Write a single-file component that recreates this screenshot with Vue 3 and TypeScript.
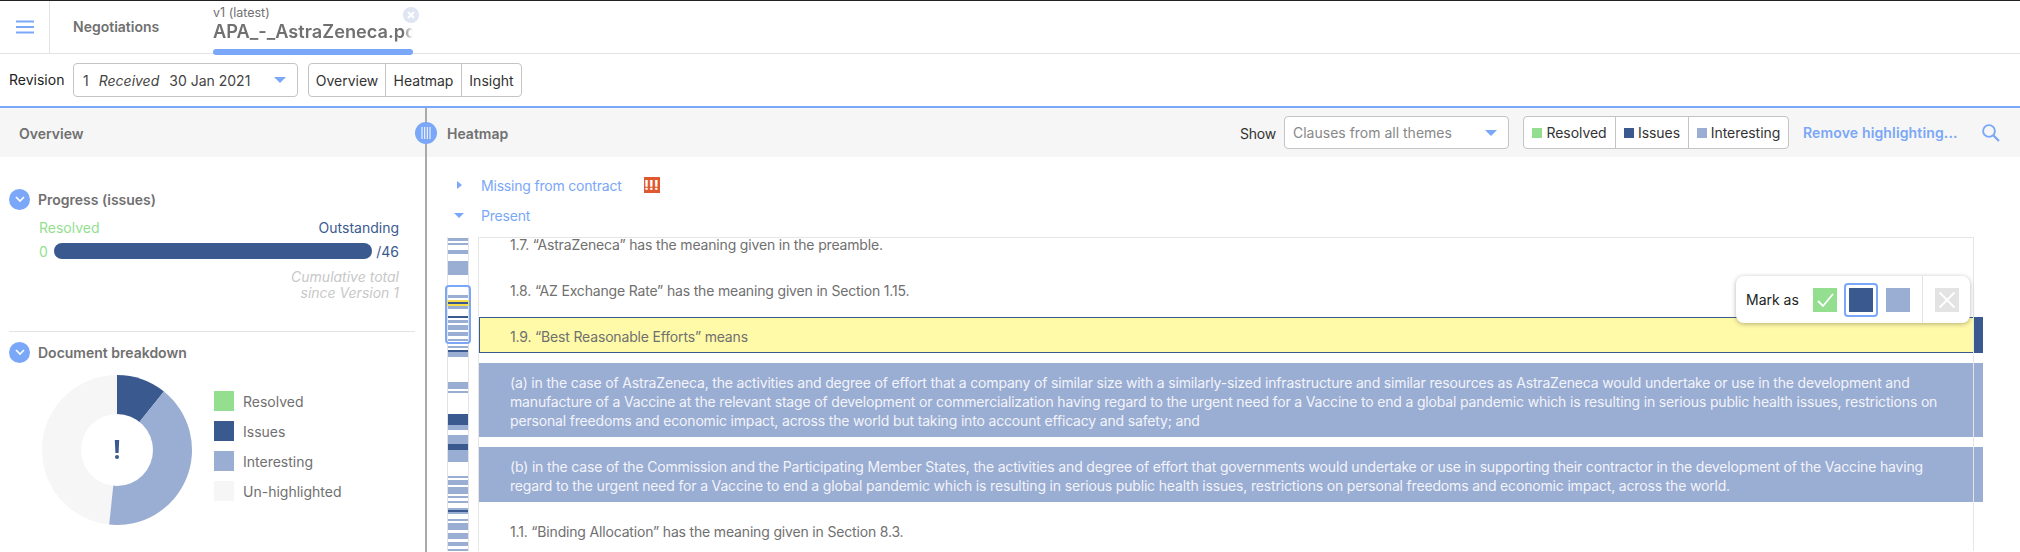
<script setup lang="ts">
type Bar = [number, number, 'l' | 'd']
const bars: Bar[] = [
  [239, 3, 'l'], [244, 2, 'l'], [251, 4, 'l'], [262, 14, 'l'], [296, 3, 'l'], [302, 5, 'd'], [307, 3, 'l'],
  [317, 2, 'd'], [321, 3, 'l'], [326, 5, 'l'], [333, 4, 'l'], [340, 2, 'l'], [347, 2, 'l'], [351, 2, 'd'],
  [353, 5, 'l'], [383, 7, 'l'], [392, 2, 'l'], [415, 11, 'd'], [426, 5, 'l'], [436, 9, 'l'], [445, 6, 'd'],
  [451, 12, 'l'], [477, 2, 'l'], [481, 5, 'l'], [488, 7, 'l'], [497, 2, 'l'], [502, 2, 'l'], [509, 2, 'l'],
  [511, 2, 'd'], [513, 2, 'l'], [520, 2, 'l'], [524, 7, 'l'], [534, 6, 'l'], [543, 4, 'l'], [550, 2, 'l'],
]
const stripBars = bars.map(([y, h, c], i) => ({
  key: i,
  cls: c === 'd' ? 'dark' : 'light',
  style: { height: `${h}px`, marginTop: `${y - (i ? bars[i - 1][0] + bars[i - 1][1] : 238)}px` },
}))
const legend = [
  { label: 'Resolved', cls: 'green' },
  { label: 'Issues', cls: 'dark' },
  { label: 'Interesting', cls: 'light' },
  { label: 'Un-highlighted', cls: 'pale' },
]
</script>

<template>
  <div class="app">
    <header class="topbar">
      <button class="menu" aria-label="Menu">
        <svg width="18" height="14" viewBox="0 0 18 14"><path d="M0 1.5h18M0 7h18M0 12.5h18" stroke="#7aa7f7" stroke-width="2" fill="none" /></svg>
      </button>
      <div class="crumb">Negotiations</div>
      <div class="tab">
        <div class="tab-ver">v1 (latest)</div>
        <div class="tab-name">APA_-_AstraZeneca.pdf</div>
        <div class="tab-bar"></div>
        <span class="tab-close">
          <svg width="16" height="16" viewBox="0 0 16 16"><path d="M5 5l6 6M11 5l-6 6" stroke="#fff" stroke-width="2" fill="none" /></svg>
        </span>
      </div>
    </header>

    <div class="toolbar">
      <span class="tool-label">Revision</span>
      <div class="select rev">
        <span>1</span><em>Received</em><span>30 Jan 2021</span>
        <i class="caret"></i>
      </div>
      <div class="seg views">
        <span class="seg-item v1">Overview</span>
        <span class="seg-item v2">Heatmap</span>
        <span class="seg-item v3">Insight</span>
      </div>
    </div>

    <div class="panels">
      <aside class="left">
        <div class="phead"><span class="ptitle">Overview</span></div>
        <section class="prog">
          <div class="sec-head">
            <span class="chev"><svg width="12" height="8" viewBox="0 0 12 8"><path d="M2 2l4 4 4-4" stroke="#fff" stroke-width="1.6" fill="none" /></svg></span>
            <span class="sec-title">Progress (issues)</span>
          </div>
          <div class="prog-labels"><span class="c-green">Resolved</span><span class="c-dark">Outstanding</span></div>
          <div class="prog-bar">
            <span class="c-green">0</span>
            <div class="bar"></div>
            <span class="c-dark">/46</span>
          </div>
          <div class="cumul">Cumulative total<br />since Version 1</div>
        </section>
        <section class="breakdown">
          <div class="sec-head">
            <span class="chev"><svg width="12" height="8" viewBox="0 0 12 8"><path d="M2 2l4 4 4-4" stroke="#fff" stroke-width="1.6" fill="none" /></svg></span>
            <span class="sec-title">Document breakdown</span>
          </div>
          <div class="chart">
            <svg class="pie" width="150" height="150" viewBox="-75 -75 150 150">
              <circle r="75" fill="#f6f6f6" />
              <path d="M0 0L0 -75A75 75 0 0 1 46.9 -58.5Z" fill="#3a5a8f" />
              <path d="M0 0L46.9 -58.5A75 75 0 0 1 -7.8 74.6Z" fill="#9aadd3" />
              <circle r="36" fill="#fff" />
              <path d="M-2.2 -10H2.2L1.6 3H-1.6Z" fill="#3a5a8f" />
              <circle cx="0" cy="7" r="2" fill="#3a5a8f" />
            </svg>
            <ul class="legend">
              <li v-for="l in legend" :key="l.label"><i :class="l.cls"></i>{{ l.label }}</li>
            </ul>
          </div>
        </section>
      </aside>

      <div class="divider"></div>

      <main class="right">
        <div class="phead rhead">
          <span class="ptitle">Heatmap</span>
          <span class="show">Show</span>
          <div class="select themes">
            <span>Clauses from all themes</span>
            <i class="caret"></i>
          </div>
          <div class="seg keys">
            <span class="seg-item k1"><i class="green"></i>Resolved</span>
            <span class="seg-item k2"><i class="dark"></i>Issues</span>
            <span class="seg-item k3"><i class="light"></i>Interesting</span>
          </div>
          <a class="remove">Remove highlighting...</a>
          <svg class="search" width="18" height="18" viewBox="0 0 18 18"><circle cx="7" cy="7" r="5.9" stroke="#7aa7f7" stroke-width="1.9" fill="none" /><path d="M11.2 11.2L17 17" stroke="#7aa7f7" stroke-width="2.2" fill="none" /></svg>
        </div>
        <div class="rbody">
          <div class="group">
            <i class="tri-r"></i><span>Missing from contract</span>
            <span class="badge">!!!</span>
          </div>
          <div class="group"><i class="tri-d"></i><span>Present</span></div>
          <div class="viewer">
            <div class="strip">
              <div v-for="b in stripBars" :key="b.key" :class="['sbar', b.cls]" :style="b.style"></div>
              <div class="marker"></div>
              <div class="frame"></div>
            </div>
            <div class="doc">
              <div class="list">
                <p class="row">1.7. “AstraZeneca” has the meaning given in the preamble.</p>
                <p class="row">1.8. “AZ Exchange Rate” has the meaning given in Section 1.15.</p>
                <p class="row sel">1.9. “Best Reasonable Efforts” means</p>
                <p class="row hl">(a) in the case of AstraZeneca, the activities and degree of effort that a company of similar size with a similarly-sized infrastructure and similar resources as AstraZeneca would undertake or use in the development and<br />manufacture of a Vaccine at the relevant stage of development or commercialization having regard to the urgent need for a Vaccine to end a global pandemic which is resulting in serious public health issues, restrictions on<br />personal freedoms and economic impact, across the world but taking into account efficacy and safety; and</p>
                <p class="row hl">(b) in the case of the Commission and the Participating Member States, the activities and degree of effort that governments would undertake or use in supporting their contractor in the development of the Vaccine having<br />regard to the urgent need for a Vaccine to end a global pandemic which is resulting in serious public health issues, restrictions on personal freedoms and economic impact, across the world.</p>
                <p class="row">1.1. “Binding Allocation” has the meaning given in Section 8.3.</p>
              </div>
            </div>
          </div>
        </div>
      </main>
    </div>

    <button class="handle" aria-label="Resize">
      <svg width="10" height="14" viewBox="0 0 10 14"><path d="M1 1v12M3.7 1v12M6.3 1v12M9 1v12" stroke="#fff" stroke-width="1" fill="none" /></svg>
    </button>

    <div class="popup">
      <span class="pop-label">Mark as</span>
      <span class="sq green check"><svg width="24" height="24" viewBox="0 0 24 24"><path d="M5 13l5 5L20 6" stroke="#fff" stroke-width="1.8" fill="none" /></svg></span>
      <span class="sq-wrap"><span class="sq dark"></span></span>
      <span class="sq light"></span>
      <span class="pop-sep"></span>
      <span class="sq grey"><svg width="24" height="24" viewBox="0 0 24 24"><path d="M4.5 4.5l15 15M19.5 4.5l-15 15" stroke="#fff" stroke-width="1.8" fill="none" /></svg></span>
    </div>
  </div>
</template>

<style>
html, body { margin: 0; background: #fff; }
</style>

<style scoped>
.app {
  position: relative;
  width: 2020px;
  height: 552px;
  overflow: hidden;
  display: flex;
  flex-direction: column;
  background: #fff;
  border-top: 1px solid #222;
  box-sizing: border-box;
  font-family: Inter, "Liberation Sans", sans-serif;
  font-size: 14px;
  color: #707070;
}
.green { background: #93df8f; }
.dark { background: #3a5a8f; }
.light { background: #9aadd3; }
.pale { background: #f6f6f6; }
.c-green { color: #93df8f; }
.c-dark { color: #3a5a8f; }

.topbar {
  height: 52px;
  flex: none;
  display: flex;
  align-items: stretch;
  border-bottom: 1px solid #e3e3e3;
}
.menu {
  width: 50px;
  padding: 0;
  border: 0;
  border-right: 1px solid #e3e3e3;
  background: none;
  display: flex;
  align-items: center;
  justify-content: center;
}
.crumb {
  margin-left: 23px;
  width: 140px;
  font-weight: 600;
  line-height: 52px;
}
.tab {
  position: relative;
  width: 200px;
}
.tab-ver {
  font-size: 12.5px;
  line-height: 14px;
  margin-top: 5px;
}
.tab-name {
  font-size: 18.2px;
  font-weight: 600;
  line-height: 22px;
  white-space: nowrap;
  overflow: hidden;
  -webkit-mask-image: linear-gradient(to right, #000 95%, transparent 100%);
  mask-image: linear-gradient(to right, #000 95%, transparent 100%);
}
.tab-bar {
  position: absolute;
  left: 0;
  right: 0;
  top: 48px;
  height: 6px;
  border-radius: 3px;
  background: #7aa7f7;
}
.tab-close {
  position: absolute;
  left: 190px;
  top: 6px;
  width: 16px;
  height: 16px;
  border-radius: 50%;
  background: #dfe5f1;
  display: flex;
}

.toolbar {
  height: 54px;
  flex: none;
  display: flex;
  align-items: center;
  box-sizing: border-box;
  padding-left: 9px;
  color: #222;
  border-bottom: 2px solid #7aa7f7;
}
.tool-label { width: 64px; margin-top: -2px; }
.select {
  position: relative;
  box-sizing: border-box;
  display: flex;
  align-items: center;
  background: #fff;
  border: 1px solid #c4c4c4;
  border-radius: 4px;
}
.rev {
  width: 225px;
  height: 34px;
  padding-left: 9px;
  gap: 10px;
  color: #444;
}
.caret {
  position: absolute;
  right: 11px;
  top: 50%;
  margin-top: -3px;
  border: 6px solid transparent;
  border-top: 6px solid #7aa7f7;
  border-bottom: 0;
}
.seg {
  display: flex;
  box-sizing: border-box;
  height: 34px;
  border: 1px solid #c4c4c4;
  border-radius: 4px;
  background: #fff;
  color: #333;
}
.seg-item {
  box-sizing: border-box;
  display: flex;
  align-items: center;
  justify-content: center;
  border-left: 1px solid #c4c4c4;
}
.seg-item:first-child { border-left: 0; }
.views { margin-left: 10px; width: 214px; }
.v1 { width: 76px; }
.v2 { width: 76px; }
.v3 { width: 60px; }

.panels {
  flex: 1;
  min-height: 0;
  display: flex;
}
.left { width: 425px; flex: none; }
.divider { width: 2px; flex: none; background: #aaa; }
.right { flex: 1; min-width: 0; }
.phead {
  height: 49px;
  background: #f6f6f6;
  display: flex;
  align-items: center;
}
.ptitle { font-weight: 600; margin-left: 19px; margin-top: 1px; }

.prog { margin: 32px 10px 0 9px; padding-bottom: 30px; border-bottom: 1px solid #e3e3e3; height: 112px; }
.sec-head { display: flex; align-items: center; height: 20px; }
.chev {
  width: 21px;
  height: 21px;
  flex: none;
  border-radius: 50%;
  background: #7aa7f7;
  display: flex;
  align-items: center;
  justify-content: center;
}
.sec-title { font-weight: 600; margin-left: 8px; }
.prog-labels {
  display: flex;
  justify-content: space-between;
  margin: 10px 16px 0 30px;
  line-height: 17px;
}
.prog-bar {
  display: flex;
  align-items: center;
  margin: 7px 16px 0 30px;
  height: 16px;
}
.bar {
  flex: 1;
  height: 16px;
  margin: 0 4px 0 6px;
  border-radius: 8px;
  background: #3a5a8f;
}
.cumul {
  margin: 10px 16px 0 0;
  text-align: right;
  font-style: italic;
  line-height: 16px;
  color: #c8c8c8;
}
.breakdown { margin: 10px 0 0 9px; }
.chart { display: flex; margin-top: 13px; margin-left: 33px; }
.pie { flex: none; display: block; }
.legend {
  list-style: none;
  margin: 16px 0 0 22px;
  padding: 0;
}
.legend li {
  display: flex;
  align-items: center;
  height: 20px;
  margin-bottom: 10px;
}
.legend i { width: 20px; height: 20px; margin-right: 9px; flex: none; }

.rhead { padding-right: 20px; }
.rhead .ptitle { margin-left: 20px; flex: 1; }
.show { color: #333; margin-right: 8px; margin-top: 2px; letter-spacing: -0.2px; }
.themes { width: 225px; height: 33px; padding-left: 8px; color: #888; }
.keys { margin-left: 14px; width: 266px; height: 33px; letter-spacing: -0.05px; }
.keys i { width: 10px; height: 10px; margin-right: 4px; flex: none; }
.k1 { width: 91px; }
.k2 { width: 73px; }
.k3 { width: 100px; }
.remove { margin-left: 14px; width: 179px; color: #7aa7f7; font-weight: 600; letter-spacing: 0.15px; }
.search { flex: none; }

.rbody { padding-top: 13px; }
.group {
  height: 30px;
  display: flex;
  align-items: center;
  padding-left: 54px;
  color: #7aa7f7;
  position: relative;
  letter-spacing: -0.2px;
}
.tri-r {
  position: absolute;
  left: 30px;
  top: 11px;
  border: 4px solid transparent;
  border-left: 5px solid #7aa7f7;
  border-right: 0;
}
.tri-d {
  position: absolute;
  left: 27px;
  top: 13px;
  border: 5px solid transparent;
  border-top: 5px solid #7aa7f7;
  border-bottom: 0;
}
.badge {
  margin-left: 22px;
  width: 16px;
  height: 16px;
  background: #e0582f;
  color: #fff;
  font-size: 13px;
  font-weight: 800;
  line-height: 16px;
  text-align: center;
  letter-spacing: 0.3px;
}
.viewer {
  display: flex;
  align-items: flex-start;
  margin: 7px 0 0 20px;
  height: 314px;
}
.strip {
  position: relative;
  box-sizing: border-box;
  width: 22px;
  height: 314px;
  flex: none;
  border-left: 1px solid #e3e3e3;
  border-right: 1px solid #e3e3e3;
}
.sbar { width: 20px; }
.marker {
  position: absolute;
  left: -1px;
  top: 63px;
  width: 22px;
  height: 6px;
  box-sizing: border-box;
  border: 2px solid #f8dc4b;
  border-left-width: 1px;
  border-right-width: 1px;
}
.frame {
  position: absolute;
  left: -3px;
  top: 48px;
  width: 26px;
  height: 59px;
  box-sizing: border-box;
  border: 2px solid #7aa7f7;
  border-radius: 4px;
}
.doc {
  position: relative;
  margin-left: 9px;
  padding-left: 1px;
  width: 1505px;
  height: 314px;
  box-sizing: border-box;
  overflow: hidden;
}
.doc::after {
  content: "";
  position: absolute;
  left: 0;
  top: 0;
  width: 1496px;
  height: 314px;
  box-sizing: border-box;
  border: 1px solid #e6e6e6;
  border-bottom: 0;
  pointer-events: none;
}
.list { margin-top: -12px; }
.row {
  margin: 0 0 10px;
  padding: 9.5px 0 7.5px 31px;
  line-height: 19px;
  white-space: nowrap;
  letter-spacing: -0.17px;
}
.sel {
  box-sizing: border-box;
  height: 36px;
  padding: 8.5px 0 6.5px 30px;
  background: #fffaa8;
  border: 1px solid #3a5a8f;
  border-right-width: 10px;
  border-left-width: 1px;
}
.hl { background: #9aadd3; color: #f2f4fa; }

.handle {
  position: absolute;
  left: 415px;
  top: 121px;
  width: 22px;
  height: 22px;
  padding: 0;
  border: 0;
  border-radius: 50%;
  background: #7aa7f7;
  display: flex;
  align-items: center;
  justify-content: center;
}

.popup {
  position: absolute;
  left: 1736px;
  top: 275px;
  width: 234px;
  height: 47px;
  box-sizing: border-box;
  padding-left: 10px;
  display: flex;
  align-items: center;
  background: #fff;
  border-radius: 8px;
  box-shadow: 0 1px 5px rgba(0, 0, 0, 0.3);
  color: #222;
}
.pop-label { width: 67px; }
.sq { width: 24px; height: 24px; flex: none; display: block; }
.sq-wrap {
  margin: 0 8px 0 7px;
  padding: 3px;
  border: 2px solid #7aa7f7;
  border-radius: 4px;
}
.pop-sep { width: 1px; height: 47px; background: #e3e3e3; margin: 0 12px; }
.grey { background: #e3e3e3; }
</style>
